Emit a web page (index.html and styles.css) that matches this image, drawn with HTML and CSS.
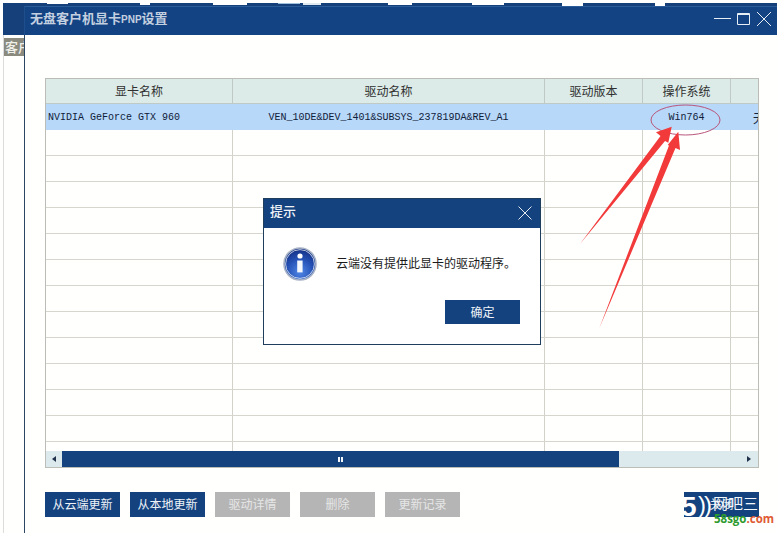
FILE: index.html
```html
<!DOCTYPE html>
<html lang="zh">
<head>
<meta charset="utf-8">
<title>无盘客户机显卡PNP设置</title>
<link rel="stylesheet" href="styles.css">
</head>
<body>
<div class="page">
  <header class="titlebar">
    <svg class="notches" width="774" height="3" viewBox="0 0 774 3">
      <rect x="44" y="0" width="21" height="1" fill="#fff"/>
      <rect x="137" y="0" width="10" height="2" fill="#fff"/>
      <rect x="210" y="0" width="34" height="2" fill="#fff"/>
      <rect x="275" y="0" width="22" height="1" fill="#9fc0dc"/>
      <rect x="300" y="0" width="18" height="2" fill="#dfe9f0"/>
      <rect x="385" y="0" width="24" height="2" fill="#fff"/>
      <rect x="469" y="0" width="32" height="2" fill="#fff"/>
      <rect x="559" y="0" width="21" height="3" fill="#fff"/>
      <rect x="652" y="0" width="10" height="3" fill="#fff"/>
    </svg>
    <div class="titlebar-inner">
      <span class="title">无盘客户机显卡<span class="title-latin">PNP</span>设置</span>
      <div class="win-controls">
        <svg width="58" height="16" viewBox="0 0 58 16">
          <path d="M0 7.5H17" stroke="#e8eef5" fill="none"/>
          <path d="M23.5 2.5H35.5V13.5H23.5ZM23.5 3.5H35.5" stroke="#e8eef5" fill="none"/>
          <path d="M43 1L57 15M57 1L43 15" stroke="#e8eef5" fill="none"/>
        </svg>
      </div>
    </div>
  </header>

  <div class="body">
    <aside class="side">
      <div class="side-tab">客户端</div>
    </aside>
    <main class="main">
      <section class="grid">
        <div class="grid-view">
          <table class="table">
            <colgroup>
              <col class="c1"><col class="c2"><col class="c3"><col class="c4"><col class="c5">
            </colgroup>
            <thead>
              <tr><th>显卡名称</th><th>驱动名称</th><th>驱动版本</th><th>操作系统</th><th></th></tr>
            </thead>
            <tbody>
              <tr class="selected">
                <td class="left">NVIDIA GeForce GTX 960</td>
                <td>VEN_10DE&amp;DEV_1401&amp;SUBSYS_237819DA&amp;REV_A1</td>
                <td></td>
                <td>Win764</td>
                <td class="clip">无</td>
              </tr>
              <tr><td></td><td></td><td></td><td></td><td></td></tr>
              <tr><td></td><td></td><td></td><td></td><td></td></tr>
              <tr><td></td><td></td><td></td><td></td><td></td></tr>
              <tr><td></td><td></td><td></td><td></td><td></td></tr>
              <tr><td></td><td></td><td></td><td></td><td></td></tr>
              <tr><td></td><td></td><td></td><td></td><td></td></tr>
              <tr><td></td><td></td><td></td><td></td><td></td></tr>
              <tr><td></td><td></td><td></td><td></td><td></td></tr>
              <tr><td></td><td></td><td></td><td></td><td></td></tr>
              <tr><td></td><td></td><td></td><td></td><td></td></tr>
              <tr><td></td><td></td><td></td><td></td><td></td></tr>
              <tr><td></td><td></td><td></td><td></td><td></td></tr>
              <tr><td></td><td></td><td></td><td></td><td></td></tr>
            </tbody>
          </table>
        </div>
        <div class="scrollbar">
          <div class="scroll-btn"><span class="tri-left"></span></div>
          <div class="scroll-thumb"><span class="grip"></span></div>
          <div class="scroll-rest"><span class="tri-right"></span></div>
        </div>
      </section>
      <div class="actions">
        <button class="btn">从云端更新</button>
        <button class="btn">从本地更新</button>
        <button class="btn off">驱动详情</button>
        <button class="btn off">删除</button>
        <button class="btn off">更新记录</button>
        <button class="btn close">关闭</button>
      </div>
    </main>
  </div>

  <div class="dialog">
    <div class="dialog-head">
      <span class="dialog-title">提示</span>
      <svg class="dialog-x" width="14" height="14" viewBox="0 0 14 14"><path d="M0.5 0.5L13.5 13.5M13.5 0.5L0.5 13.5" stroke="#e4ebf3" fill="none"/></svg>
    </div>
    <div class="dialog-body">
      <svg class="info" width="34" height="34" viewBox="0 0 34 34">
        <defs>
          <radialGradient id="orb" cx="50%" cy="75%" r="75%">
            <stop offset="0" stop-color="#4f86e6"/>
            <stop offset=".55" stop-color="#2450b4"/>
            <stop offset="1" stop-color="#122c80"/>
          </radialGradient>
        </defs>
        <circle cx="17" cy="17" r="16" fill="url(#orb)" stroke="#a9b4c6" stroke-width="1.6"/>
        <circle cx="17" cy="17" r="14.4" fill="none" stroke="#e6ebf3" stroke-width=".8"/>
        <circle cx="17" cy="9" r="2.6" fill="#fff"/>
        <path d="M14.2 13.5H19.6V25.4H14.2Z" fill="#f4f7fc"/>
      </svg>
      <span class="dialog-msg">云端没有提供此显卡的驱动程序。</span>
    </div>
    <div class="dialog-foot"><button class="btn">确定</button></div>
  </div>

  <svg class="marks" width="777" height="533" viewBox="0 0 777 533">
    <ellipse cx="685.5" cy="120" rx="34.5" ry="15" fill="none" stroke="#b9567c" stroke-width="1"/>
    <path d="M580 244L660.5 136L656 132.3L671.7 126.7L668.3 142.7L665 141Z" fill="#f23a3a"/>
    <path d="M599.3 328.3L669 145.5L667.7 145L678.3 131.7L680 150L675.5 148Z" fill="#f23a3a"/>
  </svg>

  <div class="watermark">
    <div class="wm-url"><span class="wm-green">58sgo</span><span class="wm-red">.com</span></div>
    <div class="wm-logo"><span class="wm-five">5</span><span class="wm-arc">)</span><span class="wm-arc2">)</span><span class="wm-name">网吧三</span></div>
  </div>
</div>
</body>
</html>
```

FILE: styles.css
```css
* { box-sizing: border-box; }

html, body {
  margin: 0;
  padding: 0;
  background: #fff;
}

body {
  font-family: "Noto Sans CJK SC", "Liberation Sans", sans-serif;
}

.page {
  position: relative;
  width: 777px;
  height: 533px;
  overflow: hidden;
  background: #fffffd;
  padding-top: 3px;
  display: flex;
  flex-direction: column;
}

/* title bar */
.titlebar {
  position: relative;
  margin-left: 3px;
  height: 32px;
  flex: none;
  background: #15407a;
  padding: 3px 0 0 21px;
}

.notches {
  position: absolute;
  top: 0;
  left: 0;
}

.titlebar-inner {
  height: 29px;
  display: flex;
  align-items: center;
  justify-content: space-between;
  background: #134382;
  border-top: 1px solid #2a5c98;
  border-left: 1px solid #1e4f8c;
  padding: 0 5px 1px 5px;
}

.title {
  font-size: 13px;
  font-weight: 700;
  color: #c3d0e0;
  line-height: 18px;
  margin-top: -4px;
}

.title-latin {
  font-family: "Liberation Sans", sans-serif;
  font-size: 10px;
}

.win-controls {
  display: flex;
  margin-top: -3px;
}

/* body */
.body {
  flex: 1;
  display: flex;
  min-height: 0;
}

.side {
  flex: none;
  width: 22px;
  margin-left: 3px;
  border-left: 1px solid #dcdcdc;
  border-right: 1px solid #2b4562;
  padding-top: 3px;
  overflow: hidden;
}

.side-tab {
  height: 18px;
  margin-left: -1px;
  margin-right: -1px;
  padding-left: 2px;
  background: #8a8a7f;
  color: #f0f0ea;
  font-size: 13px;
  font-weight: 500;
  line-height: 18px;
  white-space: nowrap;
  overflow: hidden;
}

.main {
  flex: 1;
  min-width: 0;
  padding: 43px 18px 0 20px;
}

/* grid */
.grid {
  width: 714px;
  height: 390px;
  border: 1px solid #bdbdb8;
  display: flex;
  flex-direction: column;
}

.grid-view {
  flex: 1;
  min-height: 0;
  overflow: hidden;
}

.table {
  width: 712px;
  table-layout: fixed;
  border-collapse: separate;
  border-spacing: 0;
}

.c1 { width: 187px; }
.c2 { width: 312px; }
.c3 { width: 98px; }
.c4 { width: 88px; }
.c5 { width: 27px; }

.table th {
  height: 25px;
  padding: 0;
  background: #dcebe8;
  border-right: 1px solid #bfc9c6;
  border-bottom: 1px solid #bfc9c6;
  font-size: 12px;
  font-weight: 400;
  color: #303030;
  text-align: center;
  line-height: 20px;
}

.table td {
  height: 26px;
  padding: 0;
  border-right: 1px solid #d2d2c9;
  border-bottom: 1px solid #d6d6cf;
  font-family: "Liberation Mono", "Noto Sans CJK SC", monospace;
  font-size: 10px;
  color: #10203a;
  text-align: center;
  white-space: nowrap;
  overflow: hidden;
}

.table th:last-child,
.table td:last-child {
  border-right: 0;
}

.table .selected td {
  background: #b7d8f8;
  border-right-color: #b7d8f8;
  border-bottom-color: #b7d8f8;
  padding-top: 2px;
}

.table td.left {
  text-align: left;
  padding-left: 2px;
}

.table td.clip {
  text-align: left;
  padding-left: 22px;
  font-family: "Noto Sans CJK SC", sans-serif;
  font-size: 12px;
}

/* scrollbar */
.scrollbar {
  flex: none;
  height: 16px;
  display: flex;
  background: #dceaee;
}

.scroll-btn {
  flex: none;
  width: 16px;
  display: flex;
  align-items: center;
  justify-content: center;
}

.scroll-thumb {
  flex: none;
  width: 557px;
  background: #14427f;
  display: flex;
  align-items: center;
  justify-content: center;
}

.scroll-rest {
  flex: 1;
  display: flex;
  align-items: center;
  justify-content: flex-end;
  padding-right: 7px;
}

.tri-left {
  border-top: 3px solid transparent;
  border-bottom: 3px solid transparent;
  border-right: 4px solid #20324a;
}

.tri-right {
  border-top: 3px solid transparent;
  border-bottom: 3px solid transparent;
  border-left: 4px solid #20324a;
}

.grip {
  width: 5px;
  height: 5px;
  border-left: 2px solid #f2f5f9;
  border-right: 2px solid #f2f5f9;
}

/* buttons */
.actions {
  display: flex;
  gap: 10px;
  margin-top: 24px;
}

.btn {
  flex: none;
  width: 75px;
  height: 25px;
  padding: 0 0 2px;
  border: 0;
  background: #14427f;
  color: #eef2f7;
  font-family: "Noto Sans CJK SC", sans-serif;
  font-size: 12px;
  line-height: 23px;
  text-align: center;
}

.btn.off {
  background: #b5b5b5;
  color: #e6e6e6;
}

.btn.close {
  margin-left: auto;
}

/* dialog */
.dialog {
  position: absolute;
  left: 263px;
  top: 198px;
  width: 278px;
  height: 147px;
  background: #fff;
  border: 1px solid #1f3d5c;
  display: flex;
  flex-direction: column;
}

.dialog-head {
  flex: none;
  height: 29px;
  background: #14427f;
  display: flex;
  align-items: center;
  justify-content: space-between;
  padding: 0 8px 0 6px;
}

.dialog-title {
  font-size: 13px;
  font-weight: 500;
  color: #eef2f7;
  line-height: 18px;
  margin-top: -6px;
}

.dialog-x {
  margin-top: -2px;
}

.dialog-body {
  flex: none;
  display: flex;
  align-items: center;
  gap: 19px;
  padding: 19px 0 0 19px;
}

.info {
  flex: none;
}

.dialog-msg {
  font-size: 12px;
  color: #1a1a1a;
  line-height: 18px;
  white-space: nowrap;
  margin-top: -2px;
}

.dialog-foot {
  display: flex;
  justify-content: flex-end;
  padding: 19px 20px 0 0;
}

.dialog-foot .btn {
  height: 24px;
  padding: 0;
  line-height: 24px;
}

/* annotation overlay */
.marks {
  position: absolute;
  left: 0;
  top: 0;
  pointer-events: none;
}

/* watermark */
.watermark {
  position: absolute;
  left: 684px;
  top: 492px;
  width: 93px;
  height: 36px;
}

.wm-logo {
  position: relative;
  width: 75px;
  height: 25px;
  overflow: hidden;
  background: none;
}

.wm-five {
  position: absolute;
  left: -3px;
  top: 1px;
  font-family: "Liberation Sans", sans-serif;
  font-weight: 700;
  font-size: 28px;
  line-height: 28px;
  color: #fff;
}

.wm-arc,
.wm-arc2 {
  position: absolute;
  top: 0;
  font-family: "Liberation Sans", sans-serif;
  font-size: 24px;
  line-height: 26px;
  color: #fff;
}

.wm-arc { left: 14px; }
.wm-arc2 { left: 20px; }

.wm-name {
  position: absolute;
  left: 29px;
  top: 2px;
  font-size: 15px;
  line-height: 18px;
  color: #f4f7fb;
  white-space: nowrap;
}

.wm-url {
  position: absolute;
  left: 30px;
  top: 20px;
  font-family: "Open Sans", "Liberation Sans", sans-serif;
  font-weight: 700;
  font-size: 11.5px;
  line-height: 14px;
  white-space: nowrap;
}

.wm-green { color: #2c9a2c; }
.wm-red { color: #e05a34; }
```
